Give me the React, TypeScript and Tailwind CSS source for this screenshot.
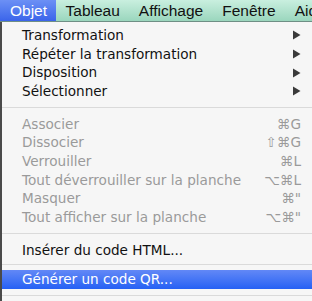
import React from 'react'

type Item =
  | { kind: 'item'; label: string; sub?: boolean; shortcut?: string; disabled?: boolean; active?: boolean }
  | { kind: 'sep'; h: string }

const ITEMS: Item[] = [
  { kind: 'item', label: 'Transformation', sub: true },
  { kind: 'item', label: 'Répéter la transformation', sub: true },
  { kind: 'item', label: 'Disposition', sub: true },
  { kind: 'item', label: 'Sélectionner', sub: true },
  { kind: 'sep', h: 'h-[14px]' },
  { kind: 'item', label: 'Associer', shortcut: '⌘G', disabled: true },
  { kind: 'item', label: 'Dissocier', shortcut: '⇧⌘G', disabled: true },
  { kind: 'item', label: 'Verrouiller', shortcut: '⌘L', disabled: true },
  { kind: 'item', label: 'Tout déverrouiller sur la planche', shortcut: '⌥⌘L', disabled: true },
  { kind: 'item', label: 'Masquer', shortcut: '⌘"', disabled: true },
  { kind: 'item', label: 'Tout afficher sur la planche', shortcut: '⌥⌘"', disabled: true },
  { kind: 'sep', h: 'h-[14px]' },
  { kind: 'item', label: 'Insérer du code HTML...' },
  { kind: 'sep', h: 'h-[11px]' },
  { kind: 'item', label: 'Générer un code QR...', active: true },
  { kind: 'sep', h: 'h-[13px]' },
]

const MENUS = ['Tableau', 'Affichage', 'Fenêtre', 'Aide']

function Arrow() {
  return (
    <svg width="9" height="10" viewBox="0 0 9 10" className="shrink-0">
      <path d="M1 0.5 L8.5 5 L1 9.5 Z" fill="#3a3a3a" />
    </svg>
  )
}

export default function App() {
  return (
    <div
      className="w-[312px] h-[301px] overflow-hidden bg-[#f6f6f6] text-[13.6px]"
      style={{ fontFamily: '"DejaVu Sans", sans-serif' }}
    >
      <div
        className="flex h-[22px] border-b border-[#6f8f85] bg-gradient-to-b from-[#c9efdf] to-[#9ad6bd] text-[#111] text-[15.5px] whitespace-nowrap"
        style={{ fontFamily: '"Liberation Sans", Arial, sans-serif' }}
      >
        <div className="flex items-center pt-[1px] pl-[10px] pr-[9px] bg-gradient-to-b from-[#6c90f5] to-[#3b64ea] text-white">
          Objet
        </div>
        {MENUS.map(m => (
          <div key={m} className="flex items-center pt-[1px] px-[9.5px]">
            {m}
          </div>
        ))}
      </div>
      <div className="border-l-2 border-[#4a4a4a] h-full pt-[4px]">
        {ITEMS.map((it, i) =>
          it.kind === 'sep' ? (
            <div key={i} className={`${it.h} flex items-center`}>
              <div className="w-full h-px bg-[#dadada]" />
            </div>
          ) : (
            <div
              key={i}
              className={`flex items-center h-[18.67px] pl-[20px] pr-[11px] ${
                it.active
                  ? 'bg-gradient-to-b from-[#6288f6] to-[#2560f4] text-white'
                  : it.disabled
                    ? 'text-[#9a9a9a]'
                    : 'text-[#111]'
              }`}
            >
              <span className="flex-1 whitespace-nowrap">{it.label}</span>
              {it.sub && <Arrow />}
              {it.shortcut && <span className="whitespace-nowrap">{it.shortcut}</span>}
            </div>
          ),
        )}
      </div>
    </div>
  )
}
